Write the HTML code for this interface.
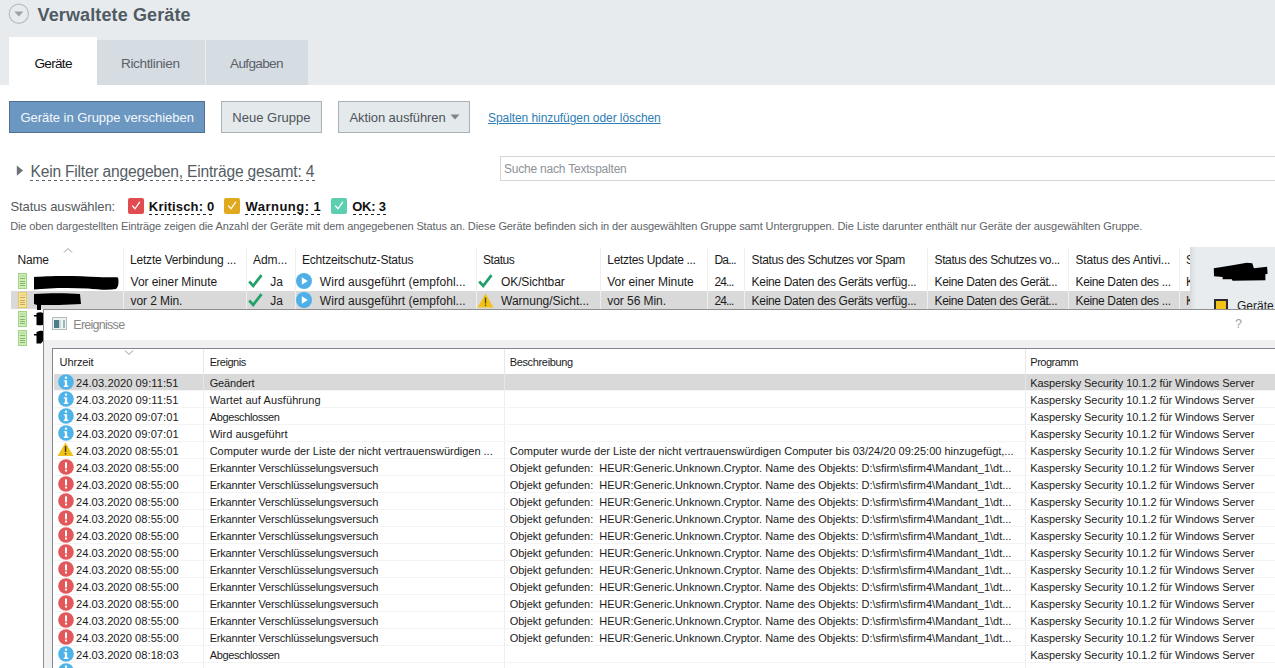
<!DOCTYPE html>
<html><head><meta charset="utf-8"><title>Verwaltete Geräte</title>
<style>
html,body{margin:0;padding:0;}
body{width:1275px;height:668px;overflow:hidden;position:relative;background:#fff;font-family:"Liberation Sans",sans-serif;}
.t{position:absolute;white-space:nowrap;line-height:1;}
.r{position:absolute;box-sizing:content-box;}
svg.r{overflow:visible}
</style></head><body>
<div class="r" style="left:0px;top:0px;width:1275px;height:85px;background:#e7ebee"></div>
<svg class="r" style="left:8px;top:3px" width="22" height="22" viewBox="0 0 22 22"><circle cx="10.8" cy="10.7" r="9.6" fill="none" stroke="#b9bfc4" stroke-width="1.2"/><path d="M6.3 8.6 L15.3 8.6 L10.8 13.6 Z" fill="#9aa1a7"/></svg>
<div class="t " style="left:37.6px;top:6.46px;font-size:18px;font-weight:bold;color:#505a63;letter-spacing:0.120px">Verwaltete Geräte</div>
<div class="r" style="left:9px;top:37px;width:88px;height:48px;background:#ffffff"></div>
<div class="r" style="left:97px;top:40px;width:108px;height:45px;background:#d5dce2"></div>
<div class="r" style="left:205px;top:40px;width:1px;height:45px;background:#e9edf0"></div>
<div class="r" style="left:206px;top:40px;width:102px;height:45px;background:#d5dce2"></div>
<div class="t " style="left:34.5px;top:56.89px;font-size:13.6px;color:#111;letter-spacing:-0.712px">Geräte</div>
<div class="t " style="left:121px;top:56.89px;font-size:13.6px;color:#5b6268;letter-spacing:-0.371px">Richtlinien</div>
<div class="t " style="left:230px;top:56.89px;font-size:13.6px;color:#5b6268;letter-spacing:-0.672px">Aufgaben</div>
<div class="r" style="left:9px;top:101px;width:194px;height:30px;background:#6b97c1;border:1px solid #4f7091"></div>
<div class="t " style="left:20.4px;top:111.10px;font-size:13px;color:#f4f8fc;letter-spacing:-0.021px">Geräte in Gruppe verschieben</div>
<div class="r" style="left:221px;top:101px;width:99px;height:30px;background:#e4e9ec;border:1px solid #aab1b6"></div>
<div class="t " style="left:232.3px;top:111.10px;font-size:13px;color:#4d545a;letter-spacing:0.015px">Neue Gruppe</div>
<div class="r" style="left:338px;top:101px;width:130px;height:30px;background:#e4e9ec;border:1px solid #aab1b6"></div>
<div class="t " style="left:349.5px;top:111.10px;font-size:13px;color:#4d545a;letter-spacing:-0.091px">Aktion ausführen</div>
<svg class="r" style="left:450px;top:113.5px" width="10" height="7"><path d="M0.5 0.5 L9.5 0.5 L5 5.5Z" fill="#7d858b"/></svg>
<div class="t " style="left:488px;top:112.24px;font-size:12px;color:#2e7db5;text-decoration:underline;letter-spacing:-0.067px">Spalten hinzufügen oder löschen</div>
<svg class="r" style="left:16px;top:165px" width="8" height="12"><path d="M0.8 0.5 L7 5.6 L0.8 10.7Z" fill="#6e7174"/></svg>
<div class="t " style="left:30.5px;top:164.19px;font-size:15.6px;color:#545c63;letter-spacing:-0.206px">Kein Filter angegeben, Einträge gesamt: 4</div>
<div class="r" style="left:30px;top:180px;width:287px;height:1px;background:repeating-linear-gradient(90deg,#5f6468 0 3px,transparent 3px 6px)"></div>
<div class="r" style="left:500px;top:156px;width:780px;height:23px;background:#fff;border:1px solid #d3d7da"></div>
<div class="t " style="left:504px;top:163.04px;font-size:12px;color:#8d9297;letter-spacing:-0.210px">Suche nach Textspalten</div>
<div class="t " style="left:10.4px;top:200.30px;font-size:13px;color:#54585c;letter-spacing:-0.090px">Status auswählen:</div>
<svg class="r" style="left:128px;top:198px" width="16" height="16"><rect x="0" y="0" width="16" height="16" rx="2" fill="#e04c50"/><path d="M4.2 7.6 L7 10.8 L11.8 3.8" fill="none" stroke="#fff" stroke-width="1.3"/></svg>
<div class="t " style="left:148.8px;top:200.30px;font-size:13px;color:#111;font-weight:bold;letter-spacing:0.193px">Kritisch: 0</div>
<div class="r" style="left:149px;top:214px;width:66px;height:1px;background:repeating-linear-gradient(90deg,#222 0 3px,transparent 3px 6px)"></div>
<svg class="r" style="left:224px;top:198px" width="16" height="16"><rect x="0" y="0" width="16" height="16" rx="2" fill="#e0a91e"/><path d="M4.2 7.6 L7 10.8 L11.8 3.8" fill="none" stroke="#fff" stroke-width="1.3"/></svg>
<div class="t " style="left:245.5px;top:200.30px;font-size:13px;color:#111;font-weight:bold;letter-spacing:0.477px">Warnung: 1</div>
<div class="r" style="left:245px;top:214px;width:76px;height:1px;background:repeating-linear-gradient(90deg,#222 0 3px,transparent 3px 6px)"></div>
<svg class="r" style="left:331px;top:198px" width="16" height="16"><rect x="0" y="0" width="16" height="16" rx="2" fill="#5ccfb1"/><path d="M4.2 7.6 L7 10.8 L11.8 3.8" fill="none" stroke="#fff" stroke-width="1.3"/></svg>
<div class="t " style="left:352.2px;top:200.30px;font-size:13px;color:#111;font-weight:bold;letter-spacing:-0.243px">OK: 3</div>
<div class="r" style="left:353px;top:214px;width:35px;height:1px;background:repeating-linear-gradient(90deg,#222 0 3px,transparent 3px 6px)"></div>
<div class="t " style="left:10.2px;top:220.89px;font-size:11px;color:#606468;letter-spacing:-0.104px">Die oben dargestellten Einträge zeigen die Anzahl der Geräte mit dem angegebenen Status an. Diese Geräte befinden sich in der ausgewählten Gruppe samt Untergruppen. Die Liste darunter enthält nur Geräte der ausgewählten Gruppe.</div>
<div class="r" style="left:11px;top:291px;width:1180px;height:18px;background:#d9d9d9"></div>
<div class="r" style="left:123px;top:248px;width:1px;height:61px;background:#eeeeee"></div>
<div class="r" style="left:246px;top:248px;width:1px;height:61px;background:#eeeeee"></div>
<div class="r" style="left:295px;top:248px;width:1px;height:61px;background:#eeeeee"></div>
<div class="r" style="left:476px;top:248px;width:1px;height:61px;background:#eeeeee"></div>
<div class="r" style="left:600px;top:248px;width:1px;height:61px;background:#eeeeee"></div>
<div class="r" style="left:707px;top:248px;width:1px;height:61px;background:#eeeeee"></div>
<div class="r" style="left:744px;top:248px;width:1px;height:61px;background:#eeeeee"></div>
<div class="r" style="left:927px;top:248px;width:1px;height:61px;background:#eeeeee"></div>
<div class="r" style="left:1068px;top:248px;width:1px;height:61px;background:#eeeeee"></div>
<div class="r" style="left:1179px;top:248px;width:1px;height:61px;background:#eeeeee"></div>
<div class="t " style="left:17.6px;top:253.84px;font-size:12px;color:#1b1b1b;letter-spacing:-0.203px">Name</div>
<div class="t " style="left:130px;top:253.84px;font-size:12px;color:#1b1b1b;letter-spacing:-0.189px">Letzte Verbindung ...</div>
<div class="t " style="left:253px;top:253.84px;font-size:12px;color:#1b1b1b;letter-spacing:-0.075px">Adm...</div>
<div class="t " style="left:302px;top:253.84px;font-size:12px;color:#1b1b1b;letter-spacing:-0.199px">Echtzeitschutz-Status</div>
<div class="t " style="left:483px;top:253.84px;font-size:12px;color:#1b1b1b;letter-spacing:-0.444px">Status</div>
<div class="t " style="left:607.3px;top:253.84px;font-size:12px;color:#1b1b1b;letter-spacing:-0.321px">Letztes Update ...</div>
<div class="t " style="left:714.4px;top:253.84px;font-size:12px;color:#1b1b1b;letter-spacing:-0.760px">Da...</div>
<div class="t " style="left:751.6px;top:253.84px;font-size:12px;color:#1b1b1b;letter-spacing:-0.384px">Status des Schutzes vor Spam</div>
<div class="t " style="left:934.6px;top:253.84px;font-size:12px;color:#1b1b1b;letter-spacing:-0.409px">Status des Schutzes vo...</div>
<div class="t " style="left:1075.5px;top:253.84px;font-size:12px;color:#1b1b1b;letter-spacing:-0.204px">Status des Antivi...</div>
<div class="t " style="left:1186px;top:253.84px;font-size:12px;color:#1b1b1b">S</div>
<svg class="r" style="left:63px;top:247px" width="10" height="7"><path d="M1 5.5 L5 1.5 L9 5.5" fill="none" stroke="#9a9a9a" stroke-width="1"/></svg>
<div class="t " style="left:130.6px;top:275.64px;font-size:12px;color:#1b1b1b;letter-spacing:-0.059px">Vor einer Minute</div>
<div class="t " style="left:270.2px;top:275.64px;font-size:12px;color:#1b1b1b">Ja</div>
<div class="t " style="left:319.8px;top:275.64px;font-size:12px;color:#1b1b1b;letter-spacing:0.045px">Wird ausgeführt (empfohl...</div>
<div class="t " style="left:501px;top:275.64px;font-size:12px;color:#1b1b1b;letter-spacing:-0.099px">OK/Sichtbar</div>
<div class="t " style="left:607.3px;top:275.64px;font-size:12px;color:#1b1b1b;letter-spacing:-0.059px">Vor einer Minute</div>
<div class="t " style="left:714.4px;top:275.64px;font-size:12px;color:#1b1b1b;letter-spacing:-0.862px">24...</div>
<div class="t " style="left:751.6px;top:275.64px;font-size:12px;color:#1b1b1b;letter-spacing:-0.315px">Keine Daten des Geräts verfüg...</div>
<div class="t " style="left:934.6px;top:275.64px;font-size:12px;color:#1b1b1b;letter-spacing:-0.395px">Keine Daten des Gerät...</div>
<div class="t " style="left:1075.5px;top:275.64px;font-size:12px;color:#1b1b1b;letter-spacing:-0.365px">Keine Daten des ...</div>
<div class="t " style="left:1186px;top:275.64px;font-size:12px;color:#1b1b1b">K</div>
<svg class="r" style="left:248px;top:274.0px" width="15" height="14"><path d="M1.2 7.5 L5.2 11.8 L13.5 1.2" fill="none" stroke="#22a06a" stroke-width="2.7"/></svg>
<svg class="r" style="left:296px;top:273.0px" width="16" height="16"><circle cx="8" cy="8" r="8" fill="#4eb0e6"/><path d="M5.8 4.2 L11.8 8 L5.8 11.8Z" fill="#fff"/></svg>
<svg class="r" style="left:478px;top:274.0px" width="15" height="14"><path d="M1.2 7.5 L5.2 11.8 L13.5 1.2" fill="none" stroke="#22a06a" stroke-width="2.7"/></svg>
<div class="t " style="left:130.6px;top:294.84px;font-size:12px;color:#1b1b1b;letter-spacing:-0.098px">vor 2 Min.</div>
<div class="t " style="left:270.2px;top:294.84px;font-size:12px;color:#1b1b1b">Ja</div>
<div class="t " style="left:319.8px;top:294.84px;font-size:12px;color:#1b1b1b;letter-spacing:0.045px">Wird ausgeführt (empfohl...</div>
<div class="t " style="left:501px;top:294.84px;font-size:12px;color:#1b1b1b;letter-spacing:-0.004px">Warnung/Sicht...</div>
<div class="t " style="left:607.3px;top:294.84px;font-size:12px;color:#1b1b1b;letter-spacing:-0.066px">vor 56 Min.</div>
<div class="t " style="left:714.4px;top:294.84px;font-size:12px;color:#1b1b1b;letter-spacing:-0.862px">24...</div>
<div class="t " style="left:751.6px;top:294.84px;font-size:12px;color:#1b1b1b;letter-spacing:-0.315px">Keine Daten des Geräts verfüg...</div>
<div class="t " style="left:934.6px;top:294.84px;font-size:12px;color:#1b1b1b;letter-spacing:-0.395px">Keine Daten des Gerät...</div>
<div class="t " style="left:1075.5px;top:294.84px;font-size:12px;color:#1b1b1b;letter-spacing:-0.365px">Keine Daten des ...</div>
<div class="t " style="left:1186px;top:294.84px;font-size:12px;color:#1b1b1b">K</div>
<svg class="r" style="left:248px;top:292.5px" width="15" height="14"><path d="M1.2 7.5 L5.2 11.8 L13.5 1.2" fill="none" stroke="#22a06a" stroke-width="2.7"/></svg>
<svg class="r" style="left:296px;top:291.5px" width="16" height="16"><circle cx="8" cy="8" r="8" fill="#4eb0e6"/><path d="M5.8 4.2 L11.8 8 L5.8 11.8Z" fill="#fff"/></svg>
<svg class="r" style="left:477px;top:292.5px" width="17" height="15"><path d="M8.5 0.5 L16.5 14.5 L0.5 14.5Z" fill="#f2c218"/><rect x="7.8" y="4.5" width="1.4" height="6" fill="#5a4a00"/><rect x="7.8" y="11.6" width="1.4" height="1.4" fill="#5a4a00"/></svg>
<svg class="r" style="left:18px;top:273px" width="9" height="16"><rect x="0.5" y="0.5" width="8" height="15" fill="#cdeeb6" stroke="#a2d386" stroke-width="1"/><path d="M2.5 3h1M4.5 3h1M6.5 3h0.8M2 5.5h5M2 8.5h5M2 10.5h5M2 12.5h5" stroke="#6fa257" stroke-width="1" opacity="0.75"/></svg>
<svg class="r" style="left:18px;top:292px" width="9" height="16"><rect x="0.5" y="0.5" width="8" height="15" fill="#f8e49c" stroke="#e3c965" stroke-width="1"/><path d="M2.5 3h1M4.5 3h1M6.5 3h0.8M2 5.5h5M2 8.5h5M2 10.5h5M2 12.5h5" stroke="#b39a3a" stroke-width="1" opacity="0.75"/></svg>
<svg class="r" style="left:18px;top:311px" width="9" height="16"><rect x="0.5" y="0.5" width="8" height="15" fill="#cdeeb6" stroke="#a2d386" stroke-width="1"/><path d="M2.5 3h1M4.5 3h1M6.5 3h0.8M2 5.5h5M2 8.5h5M2 10.5h5M2 12.5h5" stroke="#6fa257" stroke-width="1" opacity="0.75"/></svg>
<svg class="r" style="left:18px;top:330px" width="9" height="16"><rect x="0.5" y="0.5" width="8" height="15" fill="#cdeeb6" stroke="#a2d386" stroke-width="1"/><path d="M2.5 3h1M4.5 3h1M6.5 3h0.8M2 5.5h5M2 8.5h5M2 10.5h5M2 12.5h5" stroke="#6fa257" stroke-width="1" opacity="0.75"/></svg>
<svg class="r" style="left:28px;top:270px" width="100" height="80"><path d="M6 7 C20 5.5,50 5.5,70 7 C80 8,86 6.5,90 7.5 C91 12,90.5 17,88 19 C80 20.5,70 19.5,60 18.5 C40 17.5,20 18,6 19.5 Z" fill="#000"/><path d="M6 24 C20 23,40 23,52 24 L53 34 C40 35,20 35,13 35 L13 40 L9 40 L9 35 L6 34 Z" fill="#000"/><path d="M6 45 L10 45 L10 46.5 L6 46.5Z M8.5 43 C12 41.5,16 42,16.5 45 L16.5 54 C15 55.5,12 55.5,8.5 55 Z" fill="#000"/><path d="M6 64 L10 64 L10 65.5 L6 65.5Z M8.5 62 C13 60,17 60.5,17 63 C17 67,16 71,13 73.5 L8.5 73.5 Z" fill="#000"/></svg>
<div class="r" style="left:1190px;top:247px;width:85px;height:62px;background:linear-gradient(90deg,#d3d8dc 0,#dde2e5 2px,#e6eaed 5px,#e9ecef 8px)"></div>
<svg class="r" style="left:1205px;top:255px" width="70" height="35"><path d="M8.8 13.2 L27.5 10.2 L41.8 7.7 L47.3 8.2 L48.9 13.2 L62.1 11.8 L62.6 18.7 L60.4 19.2 L60.4 25.3 L27.5 25.8 L26.9 24.2 L17.6 24.2 L17.6 22 L9 21.2 Z" fill="#000"/></svg>
<div class="r" style="left:1214px;top:299px;width:10px;height:10px;background:#f1c218;border:2px solid #2b2b2b"></div>
<div class="t " style="left:1237px;top:299.84px;font-size:12px;color:#1b1b1b">Geräte</div>
<div class="r" style="left:43px;top:309px;width:1240px;height:370px;background:#fff;border:1px solid #8e8e8e"></div>
<div class="r" style="left:44px;top:340px;width:1231px;height:8px;background:#f0f0f0"></div>
<div class="r" style="left:44px;top:348px;width:8px;height:320px;background:#f0f0f0"></div>
<svg class="r" style="left:52px;top:317px" width="15" height="13"><rect x="0.5" y="0.5" width="14" height="12" fill="#eef3f3" stroke="#b5bcbd"/><rect x="2" y="3" width="5" height="8" fill="#4f7e88"/><rect x="7" y="3" width="2" height="8" fill="#c8d8da"/><rect x="11" y="3" width="2" height="8" fill="#9fb6ba"/></svg>
<div class="t " style="left:73.3px;top:319.22px;font-size:12.5px;color:#868686;letter-spacing:-0.729px">Ereignisse</div>
<div class="t " style="left:1235px;top:318.42px;font-size:12.5px;color:#a0a0a0">?</div>
<div class="r" style="left:52px;top:348px;width:1240px;height:330px;background:#fff;border:1px solid #82878f"></div>
<div class="r" style="left:203px;top:349px;width:1px;height:25px;background:#e8e8e8"></div>
<div class="r" style="left:504px;top:349px;width:1px;height:25px;background:#e8e8e8"></div>
<div class="r" style="left:1025px;top:349px;width:1px;height:25px;background:#e8e8e8"></div>
<div class="t " style="left:59.6px;top:356.69px;font-size:11px;color:#1b1b1b;letter-spacing:-0.140px">Uhrzeit</div>
<div class="t " style="left:209.7px;top:356.69px;font-size:11px;color:#1b1b1b;letter-spacing:-0.449px">Ereignis</div>
<div class="t " style="left:509.7px;top:356.69px;font-size:11px;color:#1b1b1b;letter-spacing:-0.343px">Beschreibung</div>
<div class="t " style="left:1030.3px;top:356.69px;font-size:11px;color:#1b1b1b;letter-spacing:-0.477px">Programm</div>
<svg class="r" style="left:124px;top:349px" width="10" height="7"><path d="M1 1.5 L5 5.5 L9 1.5" fill="none" stroke="#9a9a9a" stroke-width="1"/></svg>
<div class="r" style="left:54px;top:374px;width:1221px;height:17px;background:#d9d9d9"></div>
<div class="r" style="left:203px;top:374px;width:1px;height:17px;background:#e6e6e6"></div>
<div class="r" style="left:203px;top:391px;width:1px;height:277px;background:#ededf2"></div>
<div class="r" style="left:504px;top:374px;width:1px;height:17px;background:#e6e6e6"></div>
<div class="r" style="left:504px;top:391px;width:1px;height:277px;background:#ededf2"></div>
<div class="r" style="left:1025px;top:374px;width:1px;height:17px;background:#e6e6e6"></div>
<div class="r" style="left:1025px;top:391px;width:1px;height:277px;background:#ededf2"></div>
<div class="r" style="left:54px;top:390px;width:1221px;height:1px;background:#f4f4f4"></div>
<svg class="r" style="left:58px;top:374px" width="16" height="16"><circle cx="8" cy="8" r="7.8" fill="#4db3e9"/><rect x="6.9" y="2.6" width="2.2" height="2.1" fill="#fff"/><path d="M5.8 6.2 H9.1 V11.6 H10.3 V13 H5.8 V11.6 H6.9 V7.5 H5.8Z" fill="#fff"/></svg>
<div class="t " style="left:76.1px;top:378.02px;font-size:11.2px;color:#1b1b1b;letter-spacing:0.038px">24.03.2020 09:11:51</div>
<div class="t " style="left:209.7px;top:378.19px;font-size:11px;color:#1b1b1b;letter-spacing:-0.138px">Geändert</div>
<div class="t " style="left:1030.3px;top:378.19px;font-size:11px;color:#1b1b1b;letter-spacing:-0.065px">Kaspersky Security 10.1.2 für Windows Server</div>
<div class="r" style="left:54px;top:407px;width:1221px;height:1px;background:#f4f4f4"></div>
<svg class="r" style="left:58px;top:391px" width="16" height="16"><circle cx="8" cy="8" r="7.8" fill="#4db3e9"/><rect x="6.9" y="2.6" width="2.2" height="2.1" fill="#fff"/><path d="M5.8 6.2 H9.1 V11.6 H10.3 V13 H5.8 V11.6 H6.9 V7.5 H5.8Z" fill="#fff"/></svg>
<div class="t " style="left:76.1px;top:395.02px;font-size:11.2px;color:#1b1b1b;letter-spacing:0.038px">24.03.2020 09:11:51</div>
<div class="t " style="left:209.7px;top:395.19px;font-size:11px;color:#1b1b1b;letter-spacing:0.097px">Wartet auf Ausführung</div>
<div class="t " style="left:1030.3px;top:395.19px;font-size:11px;color:#1b1b1b;letter-spacing:-0.065px">Kaspersky Security 10.1.2 für Windows Server</div>
<div class="r" style="left:54px;top:424px;width:1221px;height:1px;background:#f4f4f4"></div>
<svg class="r" style="left:58px;top:408px" width="16" height="16"><circle cx="8" cy="8" r="7.8" fill="#4db3e9"/><rect x="6.9" y="2.6" width="2.2" height="2.1" fill="#fff"/><path d="M5.8 6.2 H9.1 V11.6 H10.3 V13 H5.8 V11.6 H6.9 V7.5 H5.8Z" fill="#fff"/></svg>
<div class="t " style="left:76.1px;top:412.02px;font-size:11.2px;color:#1b1b1b;letter-spacing:-0.008px">24.03.2020 09:07:01</div>
<div class="t " style="left:209.7px;top:412.19px;font-size:11px;color:#1b1b1b;letter-spacing:-0.359px">Abgeschlossen</div>
<div class="t " style="left:1030.3px;top:412.19px;font-size:11px;color:#1b1b1b;letter-spacing:-0.065px">Kaspersky Security 10.1.2 für Windows Server</div>
<div class="r" style="left:54px;top:441px;width:1221px;height:1px;background:#f4f4f4"></div>
<svg class="r" style="left:58px;top:425px" width="16" height="16"><circle cx="8" cy="8" r="7.8" fill="#4db3e9"/><rect x="6.9" y="2.6" width="2.2" height="2.1" fill="#fff"/><path d="M5.8 6.2 H9.1 V11.6 H10.3 V13 H5.8 V11.6 H6.9 V7.5 H5.8Z" fill="#fff"/></svg>
<div class="t " style="left:76.1px;top:429.02px;font-size:11.2px;color:#1b1b1b;letter-spacing:-0.008px">24.03.2020 09:07:01</div>
<div class="t " style="left:209.7px;top:429.19px;font-size:11px;color:#1b1b1b;letter-spacing:0.011px">Wird ausgeführt</div>
<div class="t " style="left:1030.3px;top:429.19px;font-size:11px;color:#1b1b1b;letter-spacing:-0.065px">Kaspersky Security 10.1.2 für Windows Server</div>
<div class="r" style="left:54px;top:458px;width:1221px;height:1px;background:#f4f4f4"></div>
<svg class="r" style="left:57px;top:442px" width="17" height="15"><path d="M8.5 0.5 L16.5 14 L0.5 14Z" fill="#efc11a"/><rect x="7.8" y="4" width="1.5" height="6" fill="#4a3b00"/><rect x="7.8" y="11" width="1.5" height="1.5" fill="#4a3b00"/></svg>
<div class="t " style="left:76.1px;top:446.02px;font-size:11.2px;color:#1b1b1b;letter-spacing:-0.008px">24.03.2020 08:55:01</div>
<div class="t " style="left:209.7px;top:446.19px;font-size:11px;color:#1b1b1b;letter-spacing:-0.012px">Computer wurde der Liste der nicht vertrauenswürdigen ...</div>
<div class="t " style="left:509.7px;top:446.19px;font-size:11px;color:#1b1b1b;letter-spacing:0.000px">Computer wurde der Liste der nicht vertrauenswürdigen Computer bis 03/24/20 09:25:00 hinzugefügt,...</div>
<div class="t " style="left:1030.3px;top:446.19px;font-size:11px;color:#1b1b1b;letter-spacing:-0.065px">Kaspersky Security 10.1.2 für Windows Server</div>
<div class="r" style="left:54px;top:475px;width:1221px;height:1px;background:#f4f4f4"></div>
<svg class="r" style="left:58px;top:459px" width="16" height="16"><circle cx="8" cy="8" r="7.8" fill="#e3585a"/><rect x="7" y="3.4" width="2" height="6" fill="#fff"/><rect x="7" y="10.6" width="2" height="1.9" fill="#fff"/></svg>
<div class="t " style="left:76.1px;top:463.02px;font-size:11.2px;color:#1b1b1b;letter-spacing:-0.008px">24.03.2020 08:55:00</div>
<div class="t " style="left:209.7px;top:463.19px;font-size:11px;color:#1b1b1b;letter-spacing:-0.196px">Erkannter Verschlüsselungsversuch</div>
<div class="t " style="left:509.7px;top:463.19px;font-size:11px;color:#1b1b1b;letter-spacing:-0.015px">Objekt gefunden:&nbsp; HEUR:Generic.Unknown.Cryptor. Name des Objekts: D:\sfirm\sfirm4\Mandant_1\dt...</div>
<div class="t " style="left:1030.3px;top:463.19px;font-size:11px;color:#1b1b1b;letter-spacing:-0.065px">Kaspersky Security 10.1.2 für Windows Server</div>
<div class="r" style="left:54px;top:492px;width:1221px;height:1px;background:#f4f4f4"></div>
<svg class="r" style="left:58px;top:476px" width="16" height="16"><circle cx="8" cy="8" r="7.8" fill="#e3585a"/><rect x="7" y="3.4" width="2" height="6" fill="#fff"/><rect x="7" y="10.6" width="2" height="1.9" fill="#fff"/></svg>
<div class="t " style="left:76.1px;top:480.02px;font-size:11.2px;color:#1b1b1b;letter-spacing:-0.008px">24.03.2020 08:55:00</div>
<div class="t " style="left:209.7px;top:480.19px;font-size:11px;color:#1b1b1b;letter-spacing:-0.196px">Erkannter Verschlüsselungsversuch</div>
<div class="t " style="left:509.7px;top:480.19px;font-size:11px;color:#1b1b1b;letter-spacing:-0.015px">Objekt gefunden:&nbsp; HEUR:Generic.Unknown.Cryptor. Name des Objekts: D:\sfirm\sfirm4\Mandant_1\dt...</div>
<div class="t " style="left:1030.3px;top:480.19px;font-size:11px;color:#1b1b1b;letter-spacing:-0.065px">Kaspersky Security 10.1.2 für Windows Server</div>
<div class="r" style="left:54px;top:509px;width:1221px;height:1px;background:#f4f4f4"></div>
<svg class="r" style="left:58px;top:493px" width="16" height="16"><circle cx="8" cy="8" r="7.8" fill="#e3585a"/><rect x="7" y="3.4" width="2" height="6" fill="#fff"/><rect x="7" y="10.6" width="2" height="1.9" fill="#fff"/></svg>
<div class="t " style="left:76.1px;top:497.02px;font-size:11.2px;color:#1b1b1b;letter-spacing:-0.008px">24.03.2020 08:55:00</div>
<div class="t " style="left:209.7px;top:497.19px;font-size:11px;color:#1b1b1b;letter-spacing:-0.196px">Erkannter Verschlüsselungsversuch</div>
<div class="t " style="left:509.7px;top:497.19px;font-size:11px;color:#1b1b1b;letter-spacing:-0.015px">Objekt gefunden:&nbsp; HEUR:Generic.Unknown.Cryptor. Name des Objekts: D:\sfirm\sfirm4\Mandant_1\dt...</div>
<div class="t " style="left:1030.3px;top:497.19px;font-size:11px;color:#1b1b1b;letter-spacing:-0.065px">Kaspersky Security 10.1.2 für Windows Server</div>
<div class="r" style="left:54px;top:526px;width:1221px;height:1px;background:#f4f4f4"></div>
<svg class="r" style="left:58px;top:510px" width="16" height="16"><circle cx="8" cy="8" r="7.8" fill="#e3585a"/><rect x="7" y="3.4" width="2" height="6" fill="#fff"/><rect x="7" y="10.6" width="2" height="1.9" fill="#fff"/></svg>
<div class="t " style="left:76.1px;top:514.02px;font-size:11.2px;color:#1b1b1b;letter-spacing:-0.008px">24.03.2020 08:55:00</div>
<div class="t " style="left:209.7px;top:514.19px;font-size:11px;color:#1b1b1b;letter-spacing:-0.196px">Erkannter Verschlüsselungsversuch</div>
<div class="t " style="left:509.7px;top:514.19px;font-size:11px;color:#1b1b1b;letter-spacing:-0.015px">Objekt gefunden:&nbsp; HEUR:Generic.Unknown.Cryptor. Name des Objekts: D:\sfirm\sfirm4\Mandant_1\dt...</div>
<div class="t " style="left:1030.3px;top:514.19px;font-size:11px;color:#1b1b1b;letter-spacing:-0.065px">Kaspersky Security 10.1.2 für Windows Server</div>
<div class="r" style="left:54px;top:543px;width:1221px;height:1px;background:#f4f4f4"></div>
<svg class="r" style="left:58px;top:527px" width="16" height="16"><circle cx="8" cy="8" r="7.8" fill="#e3585a"/><rect x="7" y="3.4" width="2" height="6" fill="#fff"/><rect x="7" y="10.6" width="2" height="1.9" fill="#fff"/></svg>
<div class="t " style="left:76.1px;top:531.02px;font-size:11.2px;color:#1b1b1b;letter-spacing:-0.008px">24.03.2020 08:55:00</div>
<div class="t " style="left:209.7px;top:531.19px;font-size:11px;color:#1b1b1b;letter-spacing:-0.196px">Erkannter Verschlüsselungsversuch</div>
<div class="t " style="left:509.7px;top:531.19px;font-size:11px;color:#1b1b1b;letter-spacing:-0.015px">Objekt gefunden:&nbsp; HEUR:Generic.Unknown.Cryptor. Name des Objekts: D:\sfirm\sfirm4\Mandant_1\dt...</div>
<div class="t " style="left:1030.3px;top:531.19px;font-size:11px;color:#1b1b1b;letter-spacing:-0.065px">Kaspersky Security 10.1.2 für Windows Server</div>
<div class="r" style="left:54px;top:560px;width:1221px;height:1px;background:#f4f4f4"></div>
<svg class="r" style="left:58px;top:544px" width="16" height="16"><circle cx="8" cy="8" r="7.8" fill="#e3585a"/><rect x="7" y="3.4" width="2" height="6" fill="#fff"/><rect x="7" y="10.6" width="2" height="1.9" fill="#fff"/></svg>
<div class="t " style="left:76.1px;top:548.02px;font-size:11.2px;color:#1b1b1b;letter-spacing:-0.008px">24.03.2020 08:55:00</div>
<div class="t " style="left:209.7px;top:548.19px;font-size:11px;color:#1b1b1b;letter-spacing:-0.196px">Erkannter Verschlüsselungsversuch</div>
<div class="t " style="left:509.7px;top:548.19px;font-size:11px;color:#1b1b1b;letter-spacing:-0.015px">Objekt gefunden:&nbsp; HEUR:Generic.Unknown.Cryptor. Name des Objekts: D:\sfirm\sfirm4\Mandant_1\dt...</div>
<div class="t " style="left:1030.3px;top:548.19px;font-size:11px;color:#1b1b1b;letter-spacing:-0.065px">Kaspersky Security 10.1.2 für Windows Server</div>
<div class="r" style="left:54px;top:577px;width:1221px;height:1px;background:#f4f4f4"></div>
<svg class="r" style="left:58px;top:561px" width="16" height="16"><circle cx="8" cy="8" r="7.8" fill="#e3585a"/><rect x="7" y="3.4" width="2" height="6" fill="#fff"/><rect x="7" y="10.6" width="2" height="1.9" fill="#fff"/></svg>
<div class="t " style="left:76.1px;top:565.02px;font-size:11.2px;color:#1b1b1b;letter-spacing:-0.008px">24.03.2020 08:55:00</div>
<div class="t " style="left:209.7px;top:565.19px;font-size:11px;color:#1b1b1b;letter-spacing:-0.196px">Erkannter Verschlüsselungsversuch</div>
<div class="t " style="left:509.7px;top:565.19px;font-size:11px;color:#1b1b1b;letter-spacing:-0.015px">Objekt gefunden:&nbsp; HEUR:Generic.Unknown.Cryptor. Name des Objekts: D:\sfirm\sfirm4\Mandant_1\dt...</div>
<div class="t " style="left:1030.3px;top:565.19px;font-size:11px;color:#1b1b1b;letter-spacing:-0.065px">Kaspersky Security 10.1.2 für Windows Server</div>
<div class="r" style="left:54px;top:594px;width:1221px;height:1px;background:#f4f4f4"></div>
<svg class="r" style="left:58px;top:578px" width="16" height="16"><circle cx="8" cy="8" r="7.8" fill="#e3585a"/><rect x="7" y="3.4" width="2" height="6" fill="#fff"/><rect x="7" y="10.6" width="2" height="1.9" fill="#fff"/></svg>
<div class="t " style="left:76.1px;top:582.02px;font-size:11.2px;color:#1b1b1b;letter-spacing:-0.008px">24.03.2020 08:55:00</div>
<div class="t " style="left:209.7px;top:582.19px;font-size:11px;color:#1b1b1b;letter-spacing:-0.196px">Erkannter Verschlüsselungsversuch</div>
<div class="t " style="left:509.7px;top:582.19px;font-size:11px;color:#1b1b1b;letter-spacing:-0.015px">Objekt gefunden:&nbsp; HEUR:Generic.Unknown.Cryptor. Name des Objekts: D:\sfirm\sfirm4\Mandant_1\dt...</div>
<div class="t " style="left:1030.3px;top:582.19px;font-size:11px;color:#1b1b1b;letter-spacing:-0.065px">Kaspersky Security 10.1.2 für Windows Server</div>
<div class="r" style="left:54px;top:611px;width:1221px;height:1px;background:#f4f4f4"></div>
<svg class="r" style="left:58px;top:595px" width="16" height="16"><circle cx="8" cy="8" r="7.8" fill="#e3585a"/><rect x="7" y="3.4" width="2" height="6" fill="#fff"/><rect x="7" y="10.6" width="2" height="1.9" fill="#fff"/></svg>
<div class="t " style="left:76.1px;top:599.02px;font-size:11.2px;color:#1b1b1b;letter-spacing:-0.008px">24.03.2020 08:55:00</div>
<div class="t " style="left:209.7px;top:599.19px;font-size:11px;color:#1b1b1b;letter-spacing:-0.196px">Erkannter Verschlüsselungsversuch</div>
<div class="t " style="left:509.7px;top:599.19px;font-size:11px;color:#1b1b1b;letter-spacing:-0.015px">Objekt gefunden:&nbsp; HEUR:Generic.Unknown.Cryptor. Name des Objekts: D:\sfirm\sfirm4\Mandant_1\dt...</div>
<div class="t " style="left:1030.3px;top:599.19px;font-size:11px;color:#1b1b1b;letter-spacing:-0.065px">Kaspersky Security 10.1.2 für Windows Server</div>
<div class="r" style="left:54px;top:628px;width:1221px;height:1px;background:#f4f4f4"></div>
<svg class="r" style="left:58px;top:612px" width="16" height="16"><circle cx="8" cy="8" r="7.8" fill="#e3585a"/><rect x="7" y="3.4" width="2" height="6" fill="#fff"/><rect x="7" y="10.6" width="2" height="1.9" fill="#fff"/></svg>
<div class="t " style="left:76.1px;top:616.02px;font-size:11.2px;color:#1b1b1b;letter-spacing:-0.008px">24.03.2020 08:55:00</div>
<div class="t " style="left:209.7px;top:616.19px;font-size:11px;color:#1b1b1b;letter-spacing:-0.196px">Erkannter Verschlüsselungsversuch</div>
<div class="t " style="left:509.7px;top:616.19px;font-size:11px;color:#1b1b1b;letter-spacing:-0.015px">Objekt gefunden:&nbsp; HEUR:Generic.Unknown.Cryptor. Name des Objekts: D:\sfirm\sfirm4\Mandant_1\dt...</div>
<div class="t " style="left:1030.3px;top:616.19px;font-size:11px;color:#1b1b1b;letter-spacing:-0.065px">Kaspersky Security 10.1.2 für Windows Server</div>
<div class="r" style="left:54px;top:645px;width:1221px;height:1px;background:#f4f4f4"></div>
<svg class="r" style="left:58px;top:629px" width="16" height="16"><circle cx="8" cy="8" r="7.8" fill="#e3585a"/><rect x="7" y="3.4" width="2" height="6" fill="#fff"/><rect x="7" y="10.6" width="2" height="1.9" fill="#fff"/></svg>
<div class="t " style="left:76.1px;top:633.02px;font-size:11.2px;color:#1b1b1b;letter-spacing:-0.008px">24.03.2020 08:55:00</div>
<div class="t " style="left:209.7px;top:633.19px;font-size:11px;color:#1b1b1b;letter-spacing:-0.196px">Erkannter Verschlüsselungsversuch</div>
<div class="t " style="left:509.7px;top:633.19px;font-size:11px;color:#1b1b1b;letter-spacing:-0.015px">Objekt gefunden:&nbsp; HEUR:Generic.Unknown.Cryptor. Name des Objekts: D:\sfirm\sfirm4\Mandant_1\dt...</div>
<div class="t " style="left:1030.3px;top:633.19px;font-size:11px;color:#1b1b1b;letter-spacing:-0.065px">Kaspersky Security 10.1.2 für Windows Server</div>
<div class="r" style="left:54px;top:662px;width:1221px;height:1px;background:#f4f4f4"></div>
<svg class="r" style="left:58px;top:646px" width="16" height="16"><circle cx="8" cy="8" r="7.8" fill="#4db3e9"/><rect x="6.9" y="2.6" width="2.2" height="2.1" fill="#fff"/><path d="M5.8 6.2 H9.1 V11.6 H10.3 V13 H5.8 V11.6 H6.9 V7.5 H5.8Z" fill="#fff"/></svg>
<div class="t " style="left:76.1px;top:650.02px;font-size:11.2px;color:#1b1b1b;letter-spacing:-0.008px">24.03.2020 08:18:03</div>
<div class="t " style="left:209.7px;top:650.19px;font-size:11px;color:#1b1b1b;letter-spacing:-0.359px">Abgeschlossen</div>
<div class="t " style="left:1030.3px;top:650.19px;font-size:11px;color:#1b1b1b;letter-spacing:-0.065px">Kaspersky Security 10.1.2 für Windows Server</div>
<div class="r" style="left:54px;top:679px;width:1221px;height:1px;background:#f4f4f4"></div>
<svg class="r" style="left:58px;top:663px" width="16" height="16"><circle cx="8" cy="8" r="7.8" fill="#4db3e9"/><rect x="6.9" y="2.6" width="2.2" height="2.1" fill="#fff"/><path d="M5.8 6.2 H9.1 V11.6 H10.3 V13 H5.8 V11.6 H6.9 V7.5 H5.8Z" fill="#fff"/></svg>
<div class="t " style="left:76.1px;top:667.02px;font-size:11.2px;color:#1b1b1b;letter-spacing:-0.008px">24.03.2020 08:18:03</div>
<div class="t " style="left:209.7px;top:667.19px;font-size:11px;color:#1b1b1b;letter-spacing:0.011px">Wird ausgeführt</div>
<div class="t " style="left:1030.3px;top:667.19px;font-size:11px;color:#1b1b1b;letter-spacing:-0.065px">Kaspersky Security 10.1.2 für Windows Server</div>
</body></html>
